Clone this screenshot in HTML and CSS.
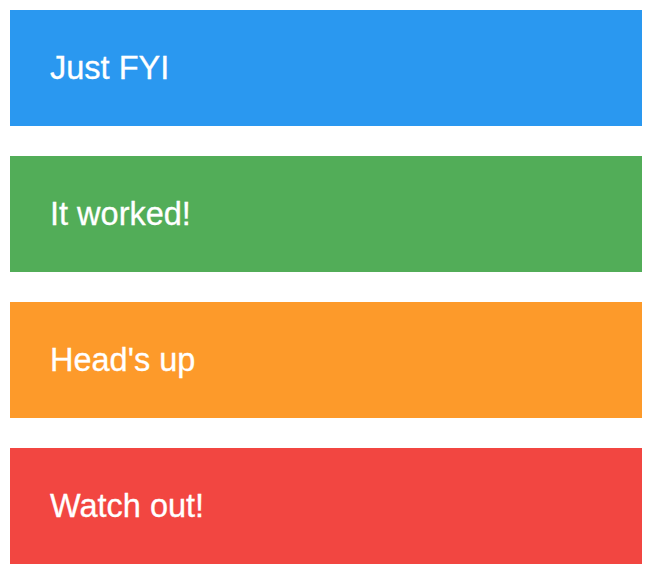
FILE: index.html
```html
<!DOCTYPE html>
<html>
<head>
<meta charset="utf-8">
<link rel="stylesheet" href="styles.css">
</head>
<body>
<div class="stack">
  <div class="alert alert-info">Just FYI</div>
  <div class="alert alert-success">It worked!</div>
  <div class="alert alert-warning">Head's up</div>
  <div class="alert alert-danger">Watch out!</div>
</div>
</body>
</html>
```
FILE: styles.css
```css
html, body {
  margin: 0;
  padding: 0;
  background: #ffffff;
}
body {
  padding: 10px;
  font-family: "Liberation Sans", Arial, sans-serif;
}
.stack {
  display: flex;
  flex-direction: column;
  gap: 30px;
}
.alert {
  height: 116px;
  box-sizing: border-box;
  padding: 0 40px;
  display: flex;
  align-items: center;
  color: #ffffff;
  font-size: 32.5px;
  -webkit-text-stroke: 0.3px #ffffff;
}
.alert-info { background: #2a98f0; }
.alert-success { background: #52ad58; }
.alert-warning { background: #fd9a2a; }
.alert-danger { background: #f24641; }
```
